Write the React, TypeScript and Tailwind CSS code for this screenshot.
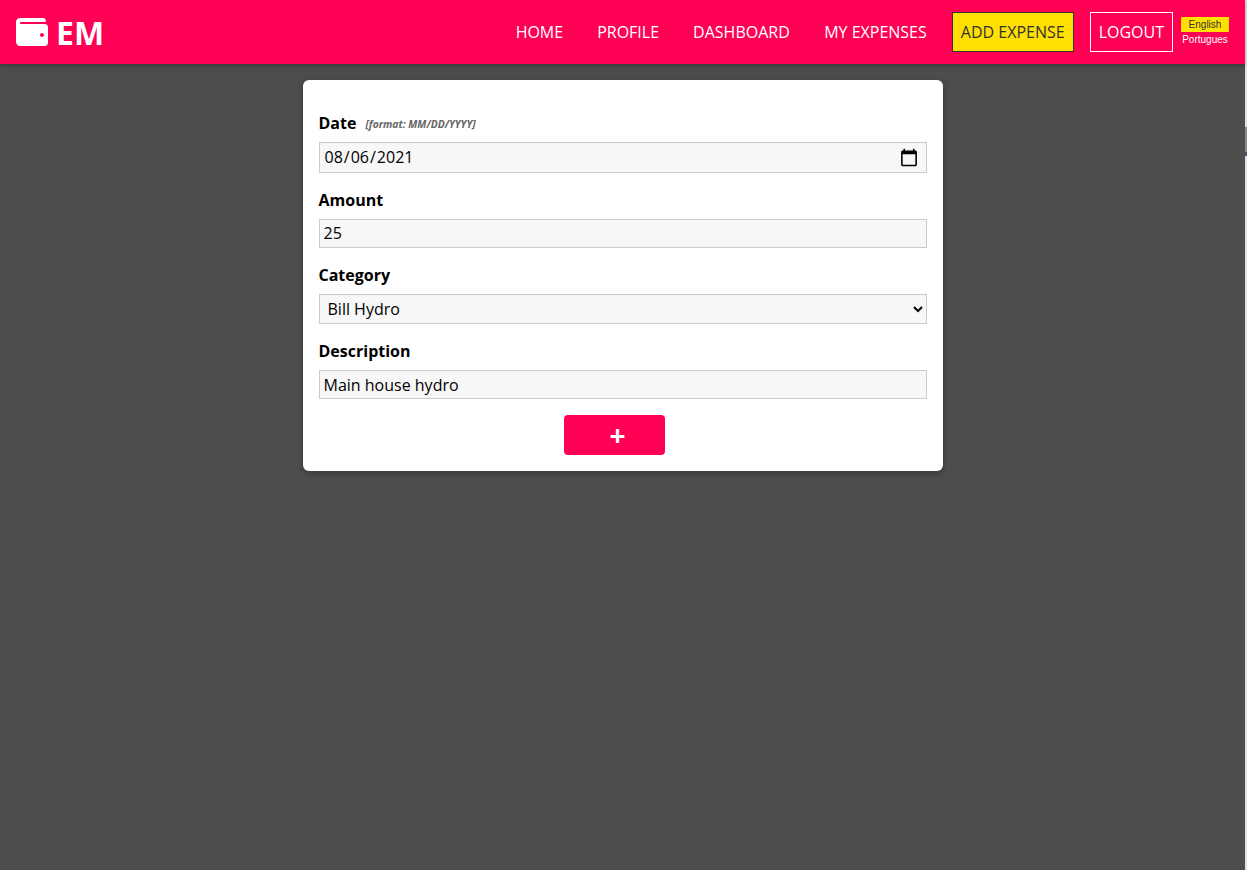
const OS = "font-['Open_Sans',sans-serif]";

function Wallet() {
  return (
    <svg viewBox="0 0 512 512" className="w-8 h-8 fill-white" aria-hidden="true">
      <path d="M461.2 128H80c-8.84 0-16-7.16-16-16s7.16-16 16-16h384c8.84 0 16-7.16 16-16 0-26.51-21.49-48-48-48H64C28.65 32 0 60.65 0 96v320c0 35.35 28.65 64 64 64h397.2c28.02 0 50.8-21.53 50.8-48V176c0-26.47-22.78-48-50.8-48zM416 336c-17.67 0-32-14.33-32-32s14.33-32 32-32 32 14.33 32 32-14.33 32-32 32z" />
    </svg>
  );
}

function Label({ children, className = "" }: { children: React.ReactNode; className?: string }) {
  return <label className={`block font-bold text-base leading-[22px] text-black ${className}`}>{children}</label>;
}

const field = "block w-full border border-[#cccccc] bg-[#f7f7f7] text-base text-black outline-none";

export default function App() {
  return (
    <div className="flex min-h-[870px] bg-[#dfe3ea]">
      <div className={`flex-1 min-w-0 bg-[#4d4d4d] ${OS}`}>
        <header className="h-16 bg-[#ff0055] shadow-[0_2px_4px_rgba(0,0,0,0.25)] flex items-center pl-4 pr-4 relative">
          <div className="flex items-center gap-2 text-white font-bold text-[32px] leading-none">
            <Wallet />
            <span className="pt-[2px]">EM</span>
          </div>
          <nav className="ml-auto flex items-center text-white text-base">
            <a className="mr-[34px]">HOME</a>
            <a className="mr-[34px]">PROFILE</a>
            <a className="mr-[34.4px]">DASHBOARD</a>
            <a className="mr-[25px]">MY EXPENSES</a>
            <a className="mr-4 h-10 px-2 flex items-center bg-[#ffe000] border border-[#333333] text-[#333333]">ADD EXPENSE</a>
            <a className="mr-2 h-10 px-2 flex items-center border border-white">LOGOUT</a>
            <div className="flex flex-col items-center w-12 font-['Liberation_Sans',sans-serif] text-[10px] leading-[14px]">
              <span className="w-full pt-px text-center bg-[#ffe000] text-[#333333]">English</span>
              <span className="w-full pt-px text-center text-white">Portugues</span>
            </div>
          </nav>
        </header>
        <main className="flex justify-center pt-4">
          <form className="w-[640px] h-[391px] bg-white rounded-md shadow-[0_2px_6px_rgba(0,0,0,0.3)] px-4 pt-[32px]">
            <Label className="flex items-center h-[22px]">
              Date
              <em className="ml-[9px] translate-y-px text-[10.3px] font-bold text-[#666666]">[format: MM/DD/YYYY]</em>
            </Label>
            <input
              type="date"
              defaultValue="2021-08-06"
              className={`${field} mt-2 h-[31px] pl-1 pr-1 pb-[2px] [&::-webkit-calendar-picker-indicator]:w-5 [&::-webkit-calendar-picker-indicator]:h-5 [&::-webkit-calendar-picker-indicator]:p-0 [&::-webkit-calendar-picker-indicator]:mr-[3px] [&::-webkit-calendar-picker-indicator]:mt-[2px]`}
            />
            <Label className="mt-4">Amount</Label>
            <input type="number" defaultValue={25} className={`${field} mt-2 h-[29px] px-1 pb-[2px]`} />
            <Label className="mt-4">Category</Label>
            <select defaultValue="Bill Hydro" className={`${field} mt-2 h-[30px] px-1 [appearance:auto]`}>
              <option>Bill Hydro</option>
            </select>
            <Label className="mt-4">Description</Label>
            <input type="text" defaultValue="Main house hydro" className={`${field} mt-2 h-[29px] px-1`} />
            <div className="mt-4 flex justify-center pr-[16px]">
              <button type="button" className="w-[101px] h-10 rounded bg-[#ff0055] text-white font-bold text-[28px] leading-none flex items-center justify-center pl-[6px]">
                +
              </button>
            </div>
          </form>
        </main>
      </div>
      <div className="w-[2px] shrink-0 flex flex-col">
        <div className="h-[127px]" />
        <div className="h-[25px] bg-[#8a8a8a]" />
        <div className="h-[4px] bg-[#4a5568]" />
      </div>
    </div>
  );
}
